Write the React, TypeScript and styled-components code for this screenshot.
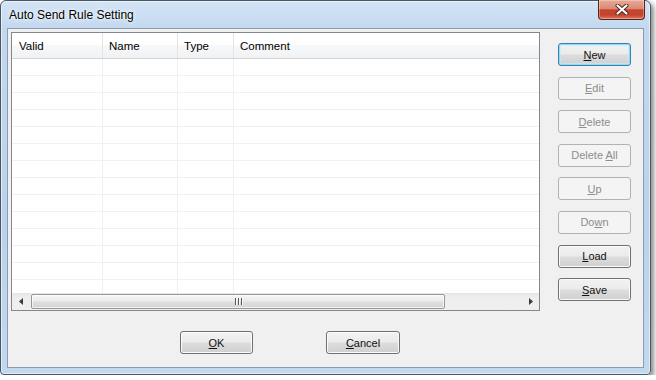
import React from 'react';
import styled, { createGlobalStyle, css } from 'styled-components';

const GlobalStyle = createGlobalStyle`
    html, body {
        margin: 0;
        padding: 0;
        background: #ffffff;
        font-family: "Liberation Sans", Arial, sans-serif;
    }
`;

const Window = styled.div`
    box-sizing: border-box;
    width: 651px;
    height: 375px;
    display: flex;
    flex-direction: column;
    padding: 0 6px 6px 6px;
    border: 1px solid #4a5666;
    border-radius: 6px 6px 4px 4px;
    background: linear-gradient(180deg, #d3e4f5 0px, #c3d8ef 28px, #bad2eb 60%, #c2d8ef 100%);
    box-shadow: inset 0 0 0 1px rgba(255, 255, 255, 0.55), 3px 3px 5px rgba(0, 0, 0, 0.45);
`;

const TitleBar = styled.div`
    height: 27px;
    display: flex;
    align-items: center;
    justify-content: space-between;
`;

const Title = styled.span`
    padding-left: 2px;
    font-size: 12px;
    color: #000;
    text-shadow: 0 0 6px #ffffff, 0 0 3px #ffffff;
`;

const CloseButton = styled.div`
    align-self: flex-start;
    box-sizing: border-box;
    width: 47px;
    height: 20px;
    margin-top: -1px;
    margin-right: -1px;
    display: flex;
    align-items: center;
    justify-content: center;
    border: 1px solid #5c2219;
    border-top: none;
    border-radius: 0 0 4px 4px;
    background: linear-gradient(180deg, #e9a998 0%, #db8a76 45%, #c5442b 52%, #c4432c 78%, #dc7a5c 100%);
    box-shadow: inset 0 0 0 1px rgba(255, 255, 255, 0.3);
`;

const Client = styled.div`
    flex: 1;
    display: flex;
    flex-direction: column;
    padding: 3px 0 0 3px;
    background: #f0f0f0;
    border: 1px solid #8c9db1;
`;

const TopArea = styled.div`
    display: flex;
    align-items: flex-start;
    gap: 18px;
`;

const ListBox = styled.div`
    box-sizing: border-box;
    width: 529px;
    height: 279px;
    display: flex;
    flex-direction: column;
    border: 1px solid #828790;
    background: #ffffff;
`;

const columns = '91px 75px 56px 1fr';

const HeaderRow = styled.div`
    box-sizing: border-box;
    height: 26px;
    display: grid;
    grid-template-columns: ${columns};
    border-bottom: 1px solid #d5d5d5;
    background: linear-gradient(180deg, #ffffff 0%, #ffffff 45%, #f7f8f9 50%, #f1f2f3 100%);
`;

const HeaderCell = styled.div`
    box-sizing: border-box;
    display: flex;
    align-items: center;
    padding-left: 6px;
    font-size: 11.5px;
    color: #000;
    border-right: 1px solid #e3e4e6;

    &:first-child {
        padding-left: 7px;
    }

    &:last-child {
        border-right: none;
    }
`;

const Body = styled.div`
    flex: 1;
    overflow: hidden;
`;

const Row = styled.div`
    box-sizing: border-box;
    height: 17px;
    display: grid;
    grid-template-columns: ${columns};
    border-bottom: 1px solid #f0f0f0;
`;

const Cell = styled.div`
    box-sizing: border-box;
    border-right: 1px solid #f0f0f0;

    &:last-child {
        border-right: none;
    }
`;

const ScrollBar = styled.div`
    height: 17px;
    display: flex;
    background: linear-gradient(180deg, #e6e6e6 0%, #eeeeee 30%, #efefef 100%);
`;

const ArrowButton = styled.div`
    width: 17px;
    display: flex;
    align-items: center;
    justify-content: center;
`;

const Track = styled.div`
    flex: 1;
    display: flex;
    align-items: center;
    padding-left: 2px;
`;

const Thumb = styled.div`
    box-sizing: border-box;
    width: 414px;
    height: 15px;
    display: flex;
    align-items: center;
    justify-content: center;
    gap: 2px;
    border: 1px solid #979797;
    border-radius: 2px;
    background: linear-gradient(180deg, #f6f6f6 0%, #ebebeb 45%, #dedede 55%, #d3d3d3 100%);
    box-shadow: inset 0 0 0 1px rgba(255, 255, 255, 0.7);
`;

const GripLine = styled.span`
    width: 1px;
    height: 7px;
    background: #555;
    box-shadow: 1px 0 0 #fafafa;
`;

const ButtonColumn = styled.div`
    display: flex;
    flex-direction: column;
    gap: 10.6px;
    padding-top: 11px;
`;

const BottomRow = styled.div`
    display: flex;
    gap: 73px;
    margin-top: 20px;
    padding-left: 169px;
`;

const Button = styled.div<{ $default?: boolean; $disabled?: boolean; $width?: number }>`
    box-sizing: border-box;
    width: ${(p) => p.$width || 73}px;
    height: 23px;
    display: flex;
    align-items: center;
    justify-content: center;
    font-size: 11px;
    color: #111;
    border: 1px solid #707070;
    border-radius: 3px;
    background: linear-gradient(180deg, #f2f2f2 0%, #ebebeb 48%, #dddddd 52%, #cfcfcf 100%);
    box-shadow: inset 0 0 0 1px #fbfbfb;

    ${(p) => p.$default && css`
        border-color: #3c7fb1;
        box-shadow: inset 0 0 0 1px #8fdbf7, inset 0 0 0 2px rgba(190, 236, 252, 0.6);
    `}

    ${(p) => p.$disabled && css`
        color: #8d8d8d;
        border-color: #adb2b5;
        background: #f4f4f4;
        box-shadow: none;
    `}
`;

const Label = styled.span`
    white-space: pre;
`;

const Key = styled.span`
    text-decoration: underline;
`;

const LeftArrow = () => (
    <svg width="4" height="7" viewBox="0 0 4 7">
        <polygon points="4,0 0,3.5 4,7" fill="#3a3a3a" />
    </svg>
);

const RightArrow = () => (
    <svg width="4" height="7" viewBox="0 0 4 7">
        <polygon points="0,0 4,3.5 0,7" fill="#3a3a3a" />
    </svg>
);

const CloseIcon = () => (
    <svg width="14" height="11" viewBox="0 0 14 11">
        <path d="M2.5 1.5 L11.5 9.5 M11.5 1.5 L2.5 9.5" stroke="#4a2620" strokeWidth="4" strokeLinecap="round" />
        <path d="M2.5 1.5 L11.5 9.5 M11.5 1.5 L2.5 9.5" stroke="#ffffff" strokeWidth="2.2" strokeLinecap="round" />
    </svg>
);

const headers = ['Valid', 'Name', 'Type', 'Comment'];
const rows = Array.from({ length: 14 });

const sideButtons: { pre: string; key: string; post: string; disabled?: boolean; isDefault?: boolean }[] = [
    { pre: '', key: 'N', post: 'ew', isDefault: true },
    { pre: '', key: 'E', post: 'dit', disabled: true },
    { pre: '', key: 'D', post: 'elete', disabled: true },
    { pre: 'Delete ', key: 'A', post: 'll', disabled: true },
    { pre: '', key: 'U', post: 'p', disabled: true },
    { pre: 'Do', key: 'w', post: 'n', disabled: true },
    { pre: '', key: 'L', post: 'oad' },
    { pre: '', key: 'S', post: 'ave' },
];

export default function App() {
    return (
        <>
            <GlobalStyle />
            <Window>
                <TitleBar>
                    <Title>Auto Send Rule Setting</Title>
                    <CloseButton>
                        <CloseIcon />
                    </CloseButton>
                </TitleBar>
                <Client>
                    <TopArea>
                        <ListBox>
                            <HeaderRow>
                                {headers.map((h) => (
                                    <HeaderCell key={h}>{h}</HeaderCell>
                                ))}
                            </HeaderRow>
                            <Body>
                                {rows.map((_, i) => (
                                    <Row key={i}>
                                        <Cell />
                                        <Cell />
                                        <Cell />
                                        <Cell />
                                    </Row>
                                ))}
                            </Body>
                            <ScrollBar>
                                <ArrowButton>
                                    <LeftArrow />
                                </ArrowButton>
                                <Track>
                                    <Thumb>
                                        <GripLine />
                                        <GripLine />
                                        <GripLine />
                                    </Thumb>
                                </Track>
                                <ArrowButton>
                                    <RightArrow />
                                </ArrowButton>
                            </ScrollBar>
                        </ListBox>
                        <ButtonColumn>
                            {sideButtons.map((b) => (
                                <Button key={b.pre + b.key + b.post} $default={b.isDefault} $disabled={b.disabled}>
                                    <Label>
                                        {b.pre}
                                        <Key>{b.key}</Key>
                                        {b.post}
                                    </Label>
                                </Button>
                            ))}
                        </ButtonColumn>
                    </TopArea>
                    <BottomRow>
                        <Button $width={73}>
                            <Label>
                                <Key>O</Key>K
                            </Label>
                        </Button>
                        <Button $width={74}>
                            <Label>
                                <Key>C</Key>ancel
                            </Label>
                        </Button>
                    </BottomRow>
                </Client>
            </Window>
        </>
    );
}
